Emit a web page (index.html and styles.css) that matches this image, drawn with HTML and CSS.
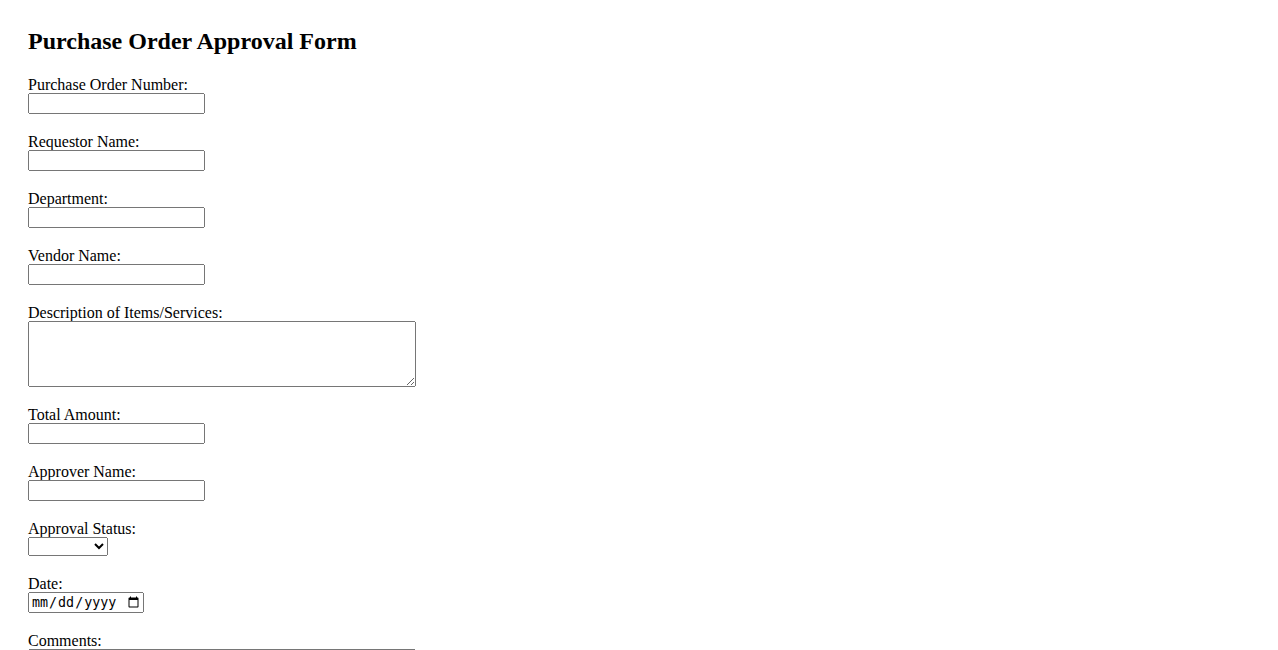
FILE: index.html
```html
<!DOCTYPE html>
<html>
<head>
<meta charset="utf-8">
<title>Purchase Order Approval Form</title>
<link rel="stylesheet" href="styles.css">
</head>
<body>
<div class="page">
<h2 class="title">Purchase Order Approval Form</h2>
<form class="form">
  <div class="field">
    <label class="label" for="po">Purchase Order Number:</label>
    <input class="text" type="text" id="po">
  </div>
  <div class="field">
    <label class="label" for="req">Requestor Name:</label>
    <input class="text" type="text" id="req">
  </div>
  <div class="field">
    <label class="label" for="dept">Department:</label>
    <input class="text" type="text" id="dept">
  </div>
  <div class="field">
    <label class="label" for="vendor">Vendor Name:</label>
    <input class="text" type="text" id="vendor">
  </div>
  <div class="field">
    <label class="label" for="desc">Description of Items/Services:</label>
    <textarea class="area" id="desc"></textarea>
  </div>
  <div class="field">
    <label class="label" for="amt">Total Amount:</label>
    <input class="text" type="text" id="amt">
  </div>
  <div class="field">
    <label class="label" for="appr">Approver Name:</label>
    <input class="text" type="text" id="appr">
  </div>
  <div class="field">
    <label class="label" for="status">Approval Status:</label>
    <select class="select" id="status">
      <option></option>
      <option>Approved</option>
      <option>Rejected</option>
      <option>Pending</option>
    </select>
  </div>
  <div class="field">
    <label class="label" for="date">Date:</label>
    <input class="date" type="date" id="date">
  </div>
  <div class="field">
    <label class="label" for="comments">Comments:</label>
    <textarea class="area" id="comments"></textarea>
  </div>
</form>
</div>
</body>
</html>
```
FILE: styles.css
```css
html, body {
  margin: 0;
  padding: 0;
  background: #ffffff;
}
body {
  font-family: "Liberation Serif", "Times New Roman", serif;
  font-size: 16px;
  color: #000;
}
.page {
  padding: 28px 28px 40px 28px;
}
.title {
  font-size: 24px;
  font-weight: bold;
  margin: 0 0 22px 0;
  line-height: 26px;
}
.form {
  display: flex;
  flex-direction: column;
  gap: 19px;
}
.field {
  display: flex;
  flex-direction: column;
  align-items: flex-start;
}
.label {
  display: block;
  line-height: 17px;
  height: 17px;
}
.text {
  box-sizing: border-box;
  width: 177px;
  height: 21px;
  margin: 0;
}
.area {
  box-sizing: border-box;
  width: 388px;
  height: 66px;
  margin: 0;
}
.select {
  box-sizing: border-box;
  width: 80px;
  height: 19px;
  margin: 0;
}
.date {
  box-sizing: border-box;
  width: 116px;
  height: 21px;
  margin: 0;
}
```
